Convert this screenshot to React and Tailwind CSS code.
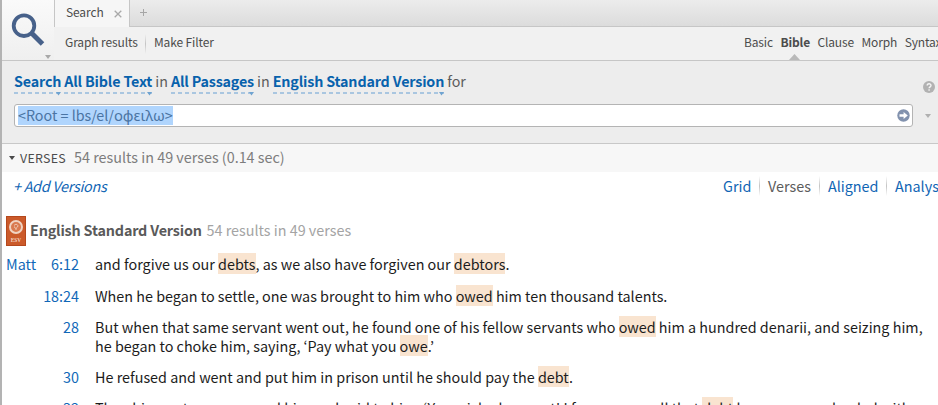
import { Fragment } from "react";

const modes = ["Basic", "Bible", "Clause", "Morph", "Syntax"];

const verses = [
  {
    book: "Matt",
    ref: "6:12",
    lines: ["and forgive us our *debts*, as we also have forgiven our *debtors*."],
  },
  {
    ref: "18:24",
    lines: ["When he began to settle, one was brought to him who *owed* him ten thousand talents."],
  },
  {
    ref: "28",
    lines: [
      "But when that same servant went out, he found one of his fellow servants who *owed* him a hundred denarii, and seizing him,",
      "he began to choke him, saying, ‘Pay what you *owe*.’",
    ],
  },
  {
    ref: "30",
    lines: ["He refused and went and put him in prison until he should pay the *debt*."],
  },
  {
    ref: "32",
    lines: [
      "Then his master summoned him and said to him, ‘You wicked servant! I forgave you all that *debt* because you pleaded with",
    ],
  },
];

// Words between asterisks are search hits
const VerseLine = ({ text }) => (
  <div className="h-[19px] leading-[19px]">
    {text.split("*").map((part, i) =>
      i % 2 === 1 ? (
        <span key={i} className="bg-[#f9e4d0]">
          {part}
        </span>
      ) : (
        <Fragment key={i}>{part}</Fragment>
      ),
    )}
  </div>
);

const Picker = ({ children }) => (
  <button className="relative h-[20px] font-bold tracking-[-0.16px] text-[#0862ac]">
    {children}
    <svg className="absolute bottom-[-3px] left-0 w-full h-[2px]">
      <line x1="0" y1="1" x2="100%" y2="1" stroke="#a9c6e0" strokeWidth="2" strokeDasharray="4 3" />
    </svg>
    <svg className="absolute bottom-[-5px] right-0 w-[5px] h-[4px]" viewBox="0 0 5 4">
      <path d="M0 0h5L2.5 3.5z" fill="#6fa3d0" />
    </svg>
  </button>
);

const Divider = () => (
  <span className="shrink-0 w-px h-[20px] bg-linear-to-b from-transparent via-[#c4c4c4] to-transparent" />
);

const Header = () => (
  <header className="flex h-[61px] border-b border-[#c6c6c6] bg-[#f1f1f1] text-[#4c4c4c] text-[12px] tracking-[-0.12px]">
    <div className="relative w-[52px] shrink-0 bg-linear-to-b from-[#fafafa] to-[#efefef]">
      <svg className="absolute left-[9px] top-[13px] w-[34px] h-[34px]" viewBox="0 0 34 34">
        <circle cx="13" cy="12.7" r="10.3" fill="none" stroke="#47618a" strokeWidth="3.8" />
        <path d="M20.5 20L31.5 31" stroke="#47618a" strokeWidth="5" />
      </svg>
      <svg className="absolute right-[3px] bottom-[1px] w-[6px] h-[4px]" viewBox="0 0 6 4">
        <path d="M0 0h6L3 4z" fill="#a8a8a8" />
      </svg>
    </div>
    <div className="flex flex-col flex-1 min-w-0">
      <div className="flex h-[27px] shrink-0">
        <div className="flex items-center w-[76px] pl-[11px] border-x border-[#c6c6c6] bg-[#f6f6f6]">
          <span className="w-[38px] pb-[3px]">Search</span>
          <svg className="ml-[10px] w-[8px] h-[8px]" viewBox="0 0 8 8">
            <path d="M.7.7l6.6 6.6M7.3.7L.7 7.3" stroke="#a9a9a9" strokeWidth="1.3" />
          </svg>
        </div>
        <div className="flex flex-1 items-center pl-[10px] pb-px border-b border-[#c6c6c6] bg-linear-to-b from-[#ececec] to-[#dcdcdc]">
          <svg className="w-[7px] h-[7px]" viewBox="0 0 7 7">
            <path d="M3.5 0v7M0 3.5h7" stroke="#a6a6a6" />
          </svg>
        </div>
      </div>
      <div className="flex items-center flex-1 pl-[11px] whitespace-nowrap">
        <span className="shrink-0 w-[80px] pb-[4px]">Graph results</span>
        <Divider />
        <span className="ml-[8px] pb-[4px]">Make Filter</span>
        <nav className="flex self-stretch items-center ml-auto w-[194px] gap-[7.5px] tracking-[-0.15px] overflow-hidden">
          {modes.map((mode) => (
            <span
              key={mode}
              className={
                mode === "Bible"
                  ? "relative flex items-center h-full pb-[4px] font-bold"
                  : "flex items-center h-full pb-[4px]"
              }
            >
              {mode}
              {mode === "Bible" && (
                <svg className="absolute bottom-0 left-[9px] w-[11px] h-[6px]" viewBox="0 0 11 6">
                  <path d="M0 6L5.500 0L11 6z" fill="#b9b9b9" />
                </svg>
              )}
            </span>
          ))}
        </nav>
      </div>
    </div>
  </header>
);

const SearchForm = () => (
  <section className="h-[83px] border-b border-[#c8c8c8] bg-[#ededed] pl-[12px] pt-[10px]">
    <div className="flex h-[33px] items-start text-[14.3px] leading-[20px] text-[#5c5c5c] whitespace-nowrap">
      <div className="flex gap-[3px]">
        <Picker>Search</Picker>
        <Picker>All Bible Text</Picker>
        <span>in</span>
        <Picker>All Passages</Picker>
        <span>in</span>
        <Picker>English Standard Version</Picker>
        <span>for</span>
      </div>
      <svg className="ml-auto mt-[10px] mr-[3px] w-[12px] h-[12px]" viewBox="0 0 12 12">
        <circle cx="6" cy="6" r="6" fill="#b2b2b2" />
        <path d="M4.200 4.600C4.200 2.200 8 2.200 8 4.500C8 5.800 6.100 5.900 6.100 7.300M6.100 8.300V9.700" fill="none" stroke="#f4f4f4" strokeWidth="1.400" />
      </svg>
    </div>
    <div className="flex items-center">
      <div className="flex items-center w-[899px] h-[23px] pl-[3px] pr-[2px] border border-[#b4b4b4] rounded-[3px] bg-white">
        <span className="h-[19px] leading-[18px] bg-[#b0d5fd] text-[14.3px] text-[#4a74a3] whitespace-nowrap">
          &lt;Root = lbs/el/<span className="font-['Noto_Sans'] text-[14.8px]">οφειλω</span>&gt;
        </span>
        <svg className="ml-auto w-[13px] h-[13px]" viewBox="0 0 13 13">
          <circle cx="6.5" cy="6.500" r="6.200" fill="#8292ae" />
          <path d="M2.500 5.300H6.600V2.900L10.800 6.500L6.600 10.100V7.700H2.500z" fill="#fff" />
        </svg>
      </div>
      <svg className="ml-[12px] w-[6px] h-[4px]" viewBox="0 0 6 4">
        <path d="M0 0h6L3 4z" fill="#b0b0b0" />
      </svg>
    </div>
  </section>
);

const EsvCover = () => (
  <svg className="w-[20px] h-[30px]" viewBox="0 0 20 30">
    <rect width="20" height="30" fill="#b5481d" />
    <rect x="1" y="1" width="18" height="28" fill="#cb5a2a" />
    <circle cx="10" cy="11" r="6" fill="#d9794f" stroke="#f0d3c2" strokeWidth="2" />
    <path d="M8 9.500C10 7 13 9 11.500 11C10 13 8 12 8.500 10.500M10 12v2" fill="none" stroke="#f3d9c9" strokeWidth=".8" />
    <text x="10" y="26" textAnchor="middle" fontSize="5.4" fontFamily="Liberation Serif" fontWeight="bold" fill="#f3d3c0">
      ESV
    </text>
  </svg>
);

const Results = () => (
  <main className="text-[14.37px] whitespace-nowrap">
    <div className="flex items-center h-[28px] pl-[7px] bg-[#f7f7f7]">
      <svg className="w-[6px] h-[4px]" viewBox="0 0 6 4">
        <path d="M0 0h6L3 4z" fill="#4a4a4a" />
      </svg>
      <span className="ml-[5px] w-[54px] text-[12.4px] tracking-[0.3px] text-[#4c4c4c]">VERSES</span>
      <span className="pb-[3px] text-[#7d7d7d]">54 results in 49 verses (0.14 sec)</span>
    </div>
    <div className="flex items-center h-[30px] pl-[11px] pb-[2px] text-[#1065b4]">
      <span className="italic tracking-[-0.27px]">+ Add Versions</span>
      <div className="flex items-center ml-auto w-[215px] overflow-hidden">
        <span className="shrink-0 w-[36px]">Grid</span>
        <Divider />
        <span className="shrink-0 ml-[8px] w-[51px] text-[#5c5c5c]">Verses</span>
        <Divider />
        <span className="shrink-0 ml-[8px] w-[58px]">Aligned</span>
        <Divider />
        <span className="shrink-0 ml-[8px]">Analysis</span>
      </div>
    </div>
    <div className="flex items-center mt-[14px] h-[30px] pl-[4px]">
      <EsvCover />
      <span className="ml-[4px] w-[176.5px] pb-[2px] font-bold tracking-[-0.18px] text-[#5a5a5a]">English Standard Version</span>
      <span className="pb-[2px] text-[#a4a4a4]">54 results in 49 verses</span>
    </div>
    <div className="flex flex-col gap-[12px] mt-[8px] leading-[19px]">
      {verses.map((verse) => (
        <div key={verse.ref} className="flex first:pb-px">
          <div className="flex justify-between w-[77px] pl-[4px] text-[#1068b8]">
            <span>{verse.book}</span>
            <span>{verse.ref}</span>
          </div>
          <div className="ml-[16px] text-[#1c1c1c]">
            {verse.lines.map((line) => (
              <VerseLine key={line} text={line} />
            ))}
          </div>
        </div>
      ))}
    </div>
  </main>
);

const App = () => {
  return (
    <div className="w-[938px] h-[405px] overflow-hidden bg-white border-l-2 border-[#b3b3b3] font-['Noto_Sans_CJK_KR','Noto_Sans',sans-serif]">
      <Header />
      <SearchForm />
      <Results />
    </div>
  );
};

export default App;
